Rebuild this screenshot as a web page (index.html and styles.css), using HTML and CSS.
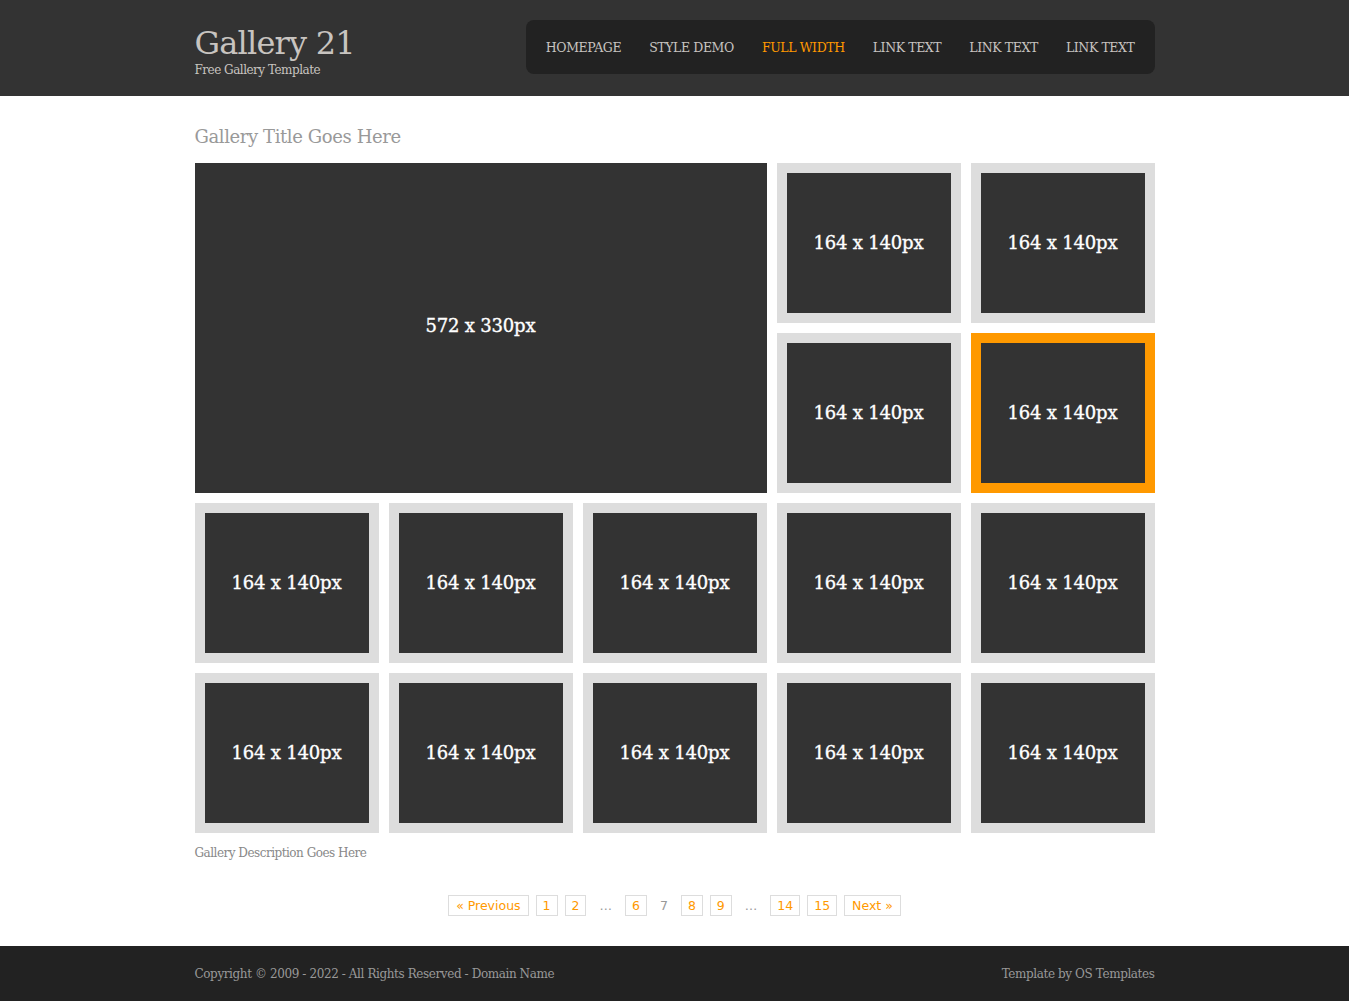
FILE: index.html
```html
<!DOCTYPE html>
<html lang="en">
<head>
<meta charset="utf-8">
<title>Gallery 21</title>
<link rel="stylesheet" href="styles.css">
</head>
<body>
<header class="site-header">
  <div class="wrap header-inner">
    <div class="brand">
      <h1 class="logo">Gallery 21</h1>
      <p class="tagline">Free Gallery Template</p>
    </div>
    <nav class="mainnav">
      <a href="#">Homepage</a>
      <a href="#">Style Demo</a>
      <a href="#" class="active">Full Width</a>
      <a href="#">Link Text</a>
      <a href="#">Link Text</a>
      <a href="#">Link Text</a>
    </nav>
  </div>
</header>

<main class="wrap content">
  <h2 class="gallery-title">Gallery Title Goes Here</h2>
  <div class="gallery">
    <div class="feature"><span>572 x 330px</span></div>
    <div class="thumb"><div class="ph">164 x 140px</div></div>
    <div class="thumb"><div class="ph">164 x 140px</div></div>
    <div class="thumb"><div class="ph">164 x 140px</div></div>
    <div class="thumb current"><div class="ph">164 x 140px</div></div>
    <div class="thumb"><div class="ph">164 x 140px</div></div>
    <div class="thumb"><div class="ph">164 x 140px</div></div>
    <div class="thumb"><div class="ph">164 x 140px</div></div>
    <div class="thumb"><div class="ph">164 x 140px</div></div>
    <div class="thumb"><div class="ph">164 x 140px</div></div>
    <div class="thumb"><div class="ph">164 x 140px</div></div>
    <div class="thumb"><div class="ph">164 x 140px</div></div>
    <div class="thumb"><div class="ph">164 x 140px</div></div>
    <div class="thumb"><div class="ph">164 x 140px</div></div>
    <div class="thumb"><div class="ph">164 x 140px</div></div>
  </div>
  <p class="description">Gallery Description Goes Here</p>
  <div class="pagination">
    <a href="#">&laquo; Previous</a>
    <a href="#">1</a>
    <a href="#">2</a>
    <span class="dots">&hellip;</span>
    <a href="#">6</a>
    <span class="cur">7</span>
    <a href="#">8</a>
    <a href="#">9</a>
    <span class="dots">&hellip;</span>
    <a href="#">14</a>
    <a href="#">15</a>
    <a href="#">Next &raquo;</a>
  </div>
</main>

<footer class="site-footer">
  <div class="wrap footer-inner">
    <p>Copyright &copy; 2009 - 2022 - All Rights Reserved - Domain Name</p>
    <p>Template by OS Templates</p>
  </div>
</footer>
</body>
</html>
```

FILE: styles.css
```css
* { box-sizing: border-box; }
html, body { margin: 0; padding: 0; }
body {
  background: #fff;
  font-family: "DejaVu Serif", "Liberation Serif", serif;
  color: #888;
}
.wrap { width: 960px; margin: 0 auto; }

.site-header { background: #333; height: 96px; }
.header-inner {
  display: flex;
  justify-content: space-between;
  align-items: flex-start;
  padding-top: 20px;
}
.brand { padding-top: 3px; }
.logo {
  margin: 0;
  font-weight: normal;
  font-size: 32px;
  line-height: 40px;
  color: #c8c4c0;
  letter-spacing: -0.8px;
}
.tagline {
  margin: -1px 0 0;
  font-size: 12px;
  line-height: 16px;
  color: #c8c4c0;
  letter-spacing: -0.5px;
}
.mainnav {
  background: #222;
  border-radius: 8px;
  height: 54px;
  display: flex;
  align-items: center;
  padding: 0 6px;
}
.mainnav a {
  text-transform: uppercase;
  color: #c8c4c0;
  text-decoration: none;
  font-size: 12.5px;
  letter-spacing: -0.4px;
  padding: 1px 14px 0;
  line-height: 54px;
}
.mainnav a.active { color: #f90; }

.content { padding-top: 28px; }
.gallery-title {
  margin: 0 0 13px;
  font-weight: normal;
  font-size: 18px;
  line-height: 26px;
  color: #999;
  letter-spacing: -0.4px;
}
.gallery {
  display: grid;
  grid-template-columns: repeat(5, 184px);
  grid-auto-rows: 160px;
  gap: 10px;
}
.feature {
  grid-column: 1 / span 3;
  grid-row: 1 / span 2;
  background: #333;
  display: flex;
  align-items: center;
  justify-content: center;
  color: #fff;
  font-size: 18px;
  font-weight: normal;
  letter-spacing: -0.2px;
  -webkit-text-stroke: 0.35px #fff;
  padding-bottom: 6px;
}
.thumb {
  background: #ddd;
  padding: 10px;
}
.thumb.current { background: #f90; }
.ph {
  background: #333;
  height: 140px;
  display: flex;
  align-items: center;
  justify-content: center;
  color: #fff;
  font-size: 18px;
  font-weight: normal;
  letter-spacing: -0.2px;
  -webkit-text-stroke: 0.35px #fff;
  padding-bottom: 2px;
}
.description {
  margin: 12px 0 0;
  font-size: 12px;
  line-height: 16px;
  color: #888;
  letter-spacing: -0.5px;
}
.pagination {
  display: flex;
  justify-content: center;
  align-items: center;
  gap: 7px;
  margin-top: 34px;
  padding-bottom: 30px;
  font-family: "DejaVu Sans", Verdana, sans-serif;
  font-size: 12.5px;
}
.pagination a {
  color: #f90;
  text-decoration: none;
  border: 1px solid #ddd;
  padding: 2px 6px;
  line-height: 15px;
}
.pagination a:first-child,
.pagination a:last-child { padding: 2px 7px; }
.pagination .dots, .pagination .cur {
  color: #999;
  padding: 0 6px;
}

.site-footer { background: #222; height: 55px; }
.footer-inner {
  display: flex;
  justify-content: space-between;
  align-items: center;
  height: 55px;
}
.footer-inner p {
  margin: 0;
  font-size: 12px;
  color: #999;
  letter-spacing: -0.4px;
}
```
